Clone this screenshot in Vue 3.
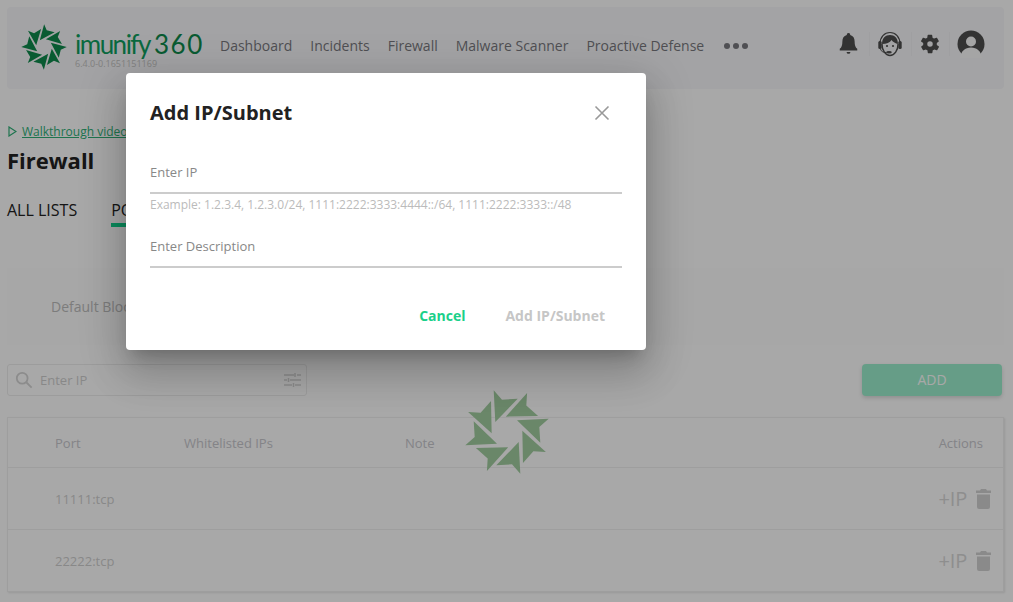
<template>
  <div class="page">
    <header class="nav">
      <div class="brand">
        <svg class="logo" width="46" height="46" viewBox="-23 -23 46 46">
          <polygon v-for="a in angles" :key="a" :points="blade" fill="#0e8a4c" :transform="`rotate(${a + 18}) scale(.52)`" />
        </svg>
        <div class="brand-text">
          <div class="wordmark"><span class="word">imunify</span><span class="num">360</span></div>
          <div class="version">6.4.0-0.1651151169</div>
        </div>
      </div>
      <nav class="menu">
        <a v-for="item in menu" :key="item">{{ item }}</a>
        <span class="dots"><i></i><i></i><i></i></span>
      </nav>
      <div class="tools">
        <svg class="tool bell" width="21" height="24" viewBox="0 0 24 27">
          <path d="M12 1a2 2 0 0 1 2 2.200c3.400.9 5 3.700 5 7.300 0 4.500.9 6.600 3 8.500v2H2v-2c2.100-1.900 3-4 3-8.500 0-3.600 1.600-6.400 5-7.300A2 2 0 0 1 12 1z" fill="#4e4e4e" />
          <path d="M9.800 22.500h4.400a2.200 2.200 0 0 1-4.400 0z" fill="#4e4e4e" />
        </svg>
        <span class="sep"></span>
        <svg class="tool" width="26" height="26" viewBox="0 0 26 26" fill="none" stroke="#4e4e4e" stroke-width="1.400">
          <path d="M3 13C3 6 7.500 1.500 13 1.500S23 6 23 13" stroke-width="1.200" />
          <path d="M5 13C5 7 8.500 4 13 4s8 3 8 9c-2.500-.5-5-2-6.500-4-1.500 2.500-5 4-9.500 4z" fill="#4e4e4e" stroke="none" />
          <path d="M5 13c0 6.500 3.500 11.500 8 11.500s8-5 8-11.500" />
          <rect x="1.300" y="10" width="3.400" height="8" rx="1.500" fill="#4e4e4e" stroke="none" />
          <rect x="21.300" y="10" width="3.400" height="8" rx="1.500" fill="#4e4e4e" stroke="none" />
          <circle cx="10" cy="15" r="1.100" fill="#4e4e4e" stroke="none" />
          <circle cx="16" cy="15" r="1.100" fill="#4e4e4e" stroke="none" />
          <path d="M3.500 18c.5 2.500 3 3.500 6 3.500" stroke-width="1" />
          <ellipse cx="12" cy="21.300" rx="2.800" ry="1.200" fill="#4e4e4e" stroke="none" />
        </svg>
        <span class="sep"></span>
        <svg class="tool" width="22" height="22" viewBox="0 0 24 24">
          <path fill="#4e4e4e" fill-rule="evenodd" d="M19.400 13a7.600 7.600 0 0 0 0-2l2.100-1.600a.5.5 0 0 0 .1-.6l-2-3.500a.5.5 0 0 0-.6-.2l-2.500 1a7.300 7.300 0 0 0-1.700-1l-.4-2.700a.5.5 0 0 0-.5-.4h-4a.5.5 0 0 0-.5.4l-.4 2.700a7.300 7.300 0 0 0-1.700 1l-2.500-1a.5.5 0 0 0-.6.2l-2 3.500a.5.5 0 0 0 .1.600L4.600 11a7.600 7.600 0 0 0 0 2l-2.100 1.600a.5.5 0 0 0-.1.600l2 3.500a.5.5 0 0 0 .6.200l2.500-1a7.300 7.300 0 0 0 1.700 1l.4 2.700a.5.500 0 0 0 .5.400h4a.5.500 0 0 0 .5-.4l.4-2.700a7.300 7.300 0 0 0 1.700-1l2.500 1a.5.500 0 0 0 .6-.2l2-3.500a.5.500 0 0 0-.1-.6zM12 15a3 3 0 1 1 0-6 3 3 0 0 1 0 6z" />
        </svg>
        <span class="sep"></span>
        <svg class="tool" width="28" height="28" viewBox="0 0 28 28">
          <circle cx="14" cy="14" r="13.500" fill="#4e4e4e" />
          <circle cx="14" cy="11.500" r="5" fill="#fafafb" />
          <path d="M3 28c1-7 5-10.500 11-10.500s10 3.500 11 10.500z" fill="#fafafb" />
        </svg>
      </div>
    </header>

    <a class="walk">
      <svg width="9" height="11" viewBox="0 0 9 11"><path d="M1 1l7 4.500-7 4.500z" fill="none" stroke="#2fb077" stroke-width="1.200" /></svg>
      <span>Walkthrough video</span>
    </a>
    <h1 class="title">Firewall</h1>
    <div class="tabs">
      <span class="tab">ALL LISTS</span>
      <span class="tab active">PORTS</span>
    </div>

    <section class="blocked">Default Blocked Ports</section>

    <div class="controls">
      <div class="search">
        <svg width="18" height="18" viewBox="0 0 20 20" fill="none" stroke="#d5d5d5" stroke-width="2">
          <circle cx="8" cy="8" r="6" />
          <path d="M12.500 12.500l6 6" />
        </svg>
        <span class="search-text">Enter IP</span>
        <svg class="sliders" width="17" height="16" viewBox="0 0 17 16" stroke="#d5d5d5" stroke-width="1.500">
          <path d="M0 3h10M13 3h4M11 1v4M0 8h3M6 8h11M4.500 6v4M0 13h8M11 13h6M9.500 11v4" />
        </svg>
      </div>
      <button class="add">ADD</button>
    </div>

    <div class="table">
      <div class="row head">
        <span class="c-port">Port</span>
        <span class="c-ips">Whitelisted IPs</span>
        <span class="c-note">Note</span>
        <span class="c-act">Actions</span>
      </div>
      <div v-for="p in ports" :key="p" class="row body">
        <span class="c-port">{{ p }}</span>
        <span class="c-act act">
          <span class="plus">+IP</span>
          <svg width="15" height="20" viewBox="0 0 15 20" fill="#d2d2d2">
            <path d="M5 0h5l1 1.500h4V4H0V1.500h4z" />
            <path d="M1 5.500h13V18a2 2 0 0 1-2 2H3a2 2 0 0 1-2-2z" />
          </svg>
        </span>
      </div>
    </div>

    <div class="overlay"></div>

    <svg class="spinner" width="90" height="90" viewBox="-45 -45 90 90">
      <polygon v-for="a in angles" :key="a" :points="blade" fill="#6a8769" :transform="`rotate(${a})`" />
    </svg>

    <div class="dialog">
      <div class="dialog-head">
        <h2>Add IP/Subnet</h2>
        <svg class="close" width="16" height="16" viewBox="0 0 16 16" stroke="#999" stroke-width="1.600">
          <path d="M1.500 1.500l13 13M14.500 1.500l-13 13" />
        </svg>
      </div>
      <div class="field">
        <label>Enter IP</label>
        <div class="hint">Example: 1.2.3.4, 1.2.3.0/24, 1111:2222:3333:4444::/64, 1111:2222:3333::/48</div>
      </div>
      <div class="field second">
        <label>Enter Description</label>
      </div>
      <div class="dialog-actions">
        <button class="cancel">Cancel</button>
        <button class="submit" disabled>Add IP/Subnet</button>
      </div>
    </div>
  </div>
</template>

<script setup>
const menu = ["Dashboard", "Incidents", "Firewall", "Malware Scanner", "Proactive Defense"];
const ports = ["11111:tcp", "22222:tcp"];
const angles = [0, 45, 90, 135, 180, 225, 270, 315];
// one blade of the pinwheel, rotated 8 times
const blade = "-13.300,-41.700 -5,-32.300 10.700,-33.300 -11.700,-10";
</script>

<style scoped>
.page {
  position: relative;
  height: 602px;
  overflow: hidden;
  padding: 7px 9px 0 7px;
  box-sizing: border-box;
  background: #fff;
  font-family: "Open Sans", "Noto Sans", sans-serif;
  color: #222;
}
.nav {
  display: flex;
  align-items: center;
  height: 82px;
  background: #f8f8fa;
  border-radius: 4px;
  padding: 0 19px 8px 14px;
  box-sizing: border-box;
}
.brand {
  display: flex;
  align-items: center;
  width: 199px;
}
.logo {
  flex: none;
  margin: 6px 8px 0 0;
}
.brand-text {
  margin-top: 10px;
}
.wordmark {
  display: flex;
  align-items: baseline;
  height: 27px;
  line-height: 27px;
}
.word {
  font-family: Lato, sans-serif;
  font-weight: 400;
  font-size: 26px;
  letter-spacing: -1.500px;
  width: 79px;
  color: #0fa060;
}
.num {
  font-family: Lato, sans-serif;
  font-weight: 400;
  font-size: 26px;
  color: #0e8a4c;
  letter-spacing: 1.500px;
}
.version {
  font-size: 9px;
  line-height: 8px;
  color: #c4c4c4;
  margin-top: 2px;
}
.menu {
  display: flex;
  align-items: center;
  gap: 18px;
  font-size: 14px;
  color: #78787f;
  margin-top: 3px;
}
.dots {
  display: flex;
  gap: 3px;
  margin-left: 2px;
}
.dots i {
  width: 6px;
  height: 6px;
  border-radius: 50%;
  background: #78787f;
}
.tools {
  margin-left: auto;
  display: flex;
  align-items: center;
}
.tool {
  flex: none;
}
.bell {
  margin-right: 2px;
}
.sep {
  width: 1px;
  height: 24px;
  background: #f2f2f4;
  margin: 0 7px 0 8px;
}
.walk {
  display: flex;
  align-items: center;
  gap: 5px;
  margin: 33px 0 0 1px;
  height: 18px;
  font-size: 12px;
  color: #2fb077;
}
.walk span {
  text-decoration: underline;
}
.title {
  margin: 5px 0 0;
  font-size: 22px;
  line-height: 30px;
  font-weight: 700;
}
.tabs {
  display: flex;
  gap: 34px;
  margin-top: 19px;
  font-size: 16px;
}
.tab {
  height: 33px;
  line-height: 32px;
  box-sizing: border-box;
}
.tab.active {
  border-bottom: 4px solid #12d48e;
}
.blocked {
  margin-top: 41px;
  height: 77px;
  padding: 29px 0 0 44px;
  box-sizing: border-box;
  font-size: 14px;
  line-height: 20px;
  color: #bdbdbd;
  background: #fefefe;
}
.controls {
  display: flex;
  justify-content: space-between;
  margin-top: 19px;
  padding-right: 2px;
}
.search {
  display: flex;
  align-items: center;
  width: 300px;
  height: 32px;
  box-sizing: border-box;
  border: 1px solid #ededed;
  border-radius: 3px;
  padding: 0 5px 0 7px;
}
.search-text {
  margin-left: 7px;
  font-size: 13px;
  color: #cfcfcf;
}
.sliders {
  margin-left: auto;
}
.add {
  width: 140px;
  height: 32px;
  padding: 0 0 2px;
  border: 0;
  border-radius: 4px;
  background: #9cefcd;
  color: #fff;
  font-family: inherit;
  font-size: 14px;
  box-shadow: 0 2px 4px rgba(0, 0, 0, .15);
}
.table {
  margin-top: 21px;
  border: 1px solid #f0f0f0;
  box-shadow: 1px 1px 2px rgba(0, 0, 0, .1);
}
.row {
  display: flex;
  align-items: center;
  font-size: 13px;
  color: #cfcfcf;
  border-top: 1px solid #f0f0f0;
  height: 62px;
  box-sizing: border-box;
}
.row.head {
  border-top: 0;
  height: 49px;
  color: #c8c8ce;
}
.c-port {
  margin-left: 47px;
  width: 129px;
}
.c-ips {
  width: 221px;
}
.c-act {
  margin-left: auto;
  margin-right: 20px;
}
.act {
  display: flex;
  align-items: center;
  gap: 9px;
  margin-right: 12px;
}
.plus {
  font-size: 20px;
  font-weight: 400;
  letter-spacing: -.2px;
  color: #d8d8d8;
}
.overlay {
  position: absolute;
  inset: 0;
  background: rgba(0, 0, 0, .34);
}
.spinner {
  position: absolute;
  left: 462px;
  top: 387px;
}
.dialog {
  position: absolute;
  left: 126px;
  top: 73px;
  width: 520px;
  height: 277px;
  box-sizing: border-box;
  padding: 23px 24px 24px;
  background: #fff;
  border-radius: 4px;
  box-shadow: 0 11px 15px -7px rgba(0, 0, 0, .2), 0 24px 38px 3px rgba(0, 0, 0, .14), 0 9px 46px 8px rgba(0, 0, 0, .12);
}
.dialog-head {
  display: flex;
  align-items: center;
  justify-content: space-between;
  height: 32px;
  padding-right: 12px;
}
.dialog-head h2 {
  margin: 0;
  font-size: 20px;
  font-weight: 700;
  color: #222;
}
.close {
  margin-top: 2px;
}
.field {
  margin-top: 26px;
  width: 472px;
}
.field label {
  display: block;
  height: 40px;
  box-sizing: border-box;
  padding-top: 9px;
  border-bottom: 2px solid #ccc;
  font-size: 13px;
  line-height: 18px;
  color: #888;
}
.hint {
  font-size: 12px;
  line-height: 16px;
  margin-top: 3px;
  color: #bbb;
}
.field.second {
  margin-top: 15px;
}
.dialog-actions {
  display: flex;
  justify-content: flex-end;
  gap: 40px;
  margin-top: 38px;
  padding-right: 17px;
}
.dialog-actions button {
  border: 0;
  padding: 0;
  background: none;
  font-family: inherit;
  font-size: 14px;
  font-weight: 700;
  line-height: 20px;
}
.cancel {
  color: #1ad08a;
}
.submit {
  color: #c6c6c6;
}
</style>

<style>
html, body {
  margin: 0;
  overflow: hidden;
}
</style>
